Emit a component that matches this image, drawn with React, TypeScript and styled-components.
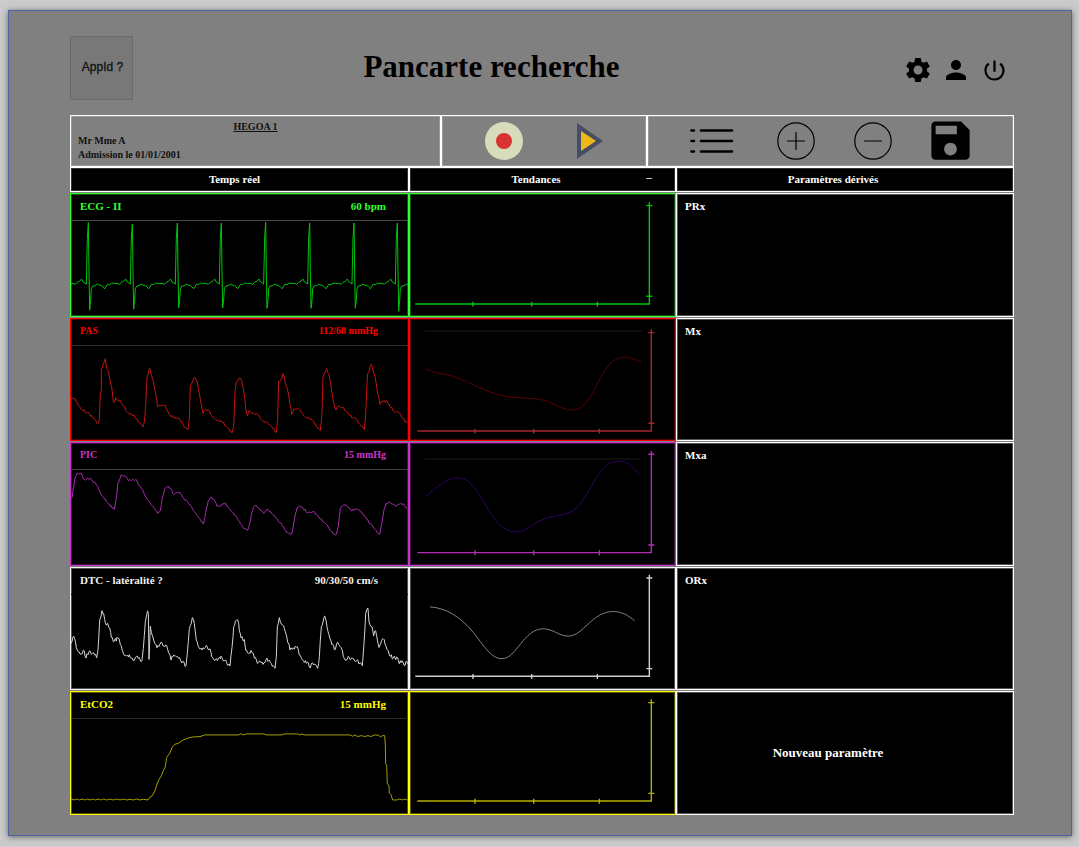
import React from "react";
import styled, { createGlobalStyle } from "styled-components";
import { MdPerson, MdPowerSettingsNew, MdSave, MdSettings } from "react-icons/md";

const GlobalStyle = createGlobalStyle`
  * { box-sizing: border-box; }
  body {
    margin: 0;
    background: #cbcbcb;
    font-family: "Liberation Serif", "Times New Roman", serif;
  }
`;

/* ---------- signal data ---------- */

type Point = [number, number];

const toPoints = (points: Point[]) => points.map((p) => p.join(",")).join(" ");

/** Parses "x y x y …" into points. */
const parse = (text: string): Point[] => {
  const n = text.trim().split(/\s+/).map(Number);
  const out: Point[] = [];
  for (let i = 0; i + 1 < n.length; i += 2) out.push([n[i], n[i + 1]]);
  return out;
};

/** Adds the small sampling noise of a sensor between the key points. */
const withNoise = (points: Point[], amount: number): Point[] => {
  let seed = 7;
  const noise = () => {
    seed = (seed * 1103515245 + 12345) % 2147483648;
    return (seed / 2147483648 - 0.5) * 2 * amount;
  };
  const out: Point[] = [points[0]];
  for (let i = 1; i < points.length; i++) {
    const [x0, y0] = points[i - 1];
    const [x1, y1] = points[i];
    const steps = Math.max(1, Math.round((x1 - x0) / 3));
    for (let s = 1; s < steps; s++) {
      const t = s / steps;
      out.push([Math.round(x0 + (x1 - x0) * t), Math.round(y0 + (y1 - y0) * t + noise())]);
    }
    out.push([x1, y1]);
  }
  return out;
};

const ecgBeats = [
  { x: 85, top: 112, low: 377 },
  { x: 217, top: 117, low: 374 },
  { x: 352, top: 114, low: 370 },
  { x: 484, top: 114, low: 370 },
  { x: 617, top: 112, low: 371 },
  { x: 749, top: 114, low: 371 },
  { x: 882, top: 114, low: 371 },
  { x: 1012, top: 114, low: 380 },
];

const ecg: Point[] = [[33, 298], ...ecgBeats.flatMap(({ x, top, low }): Point[] => [
  [x - 46, 296], [x - 39, 299], [x - 33, 293], [x - 26, 289], [x - 20, 283], [x - 16, 291],
  [x - 10, 295], [x - 6, 298], [x - 5, 250], [x - 3, 160], [x, top], [x + 1, 180], [x + 2, 260],
  [x + 4, low], [x + 7, 345], [x + 9, 312], [x + 13, 304], [x + 20, 303], [x + 27, 298],
  [x + 32, 301], [x + 39, 302], [x + 44, 307], [x + 49, 312], [x + 54, 304], [x + 58, 298],
  [x + 64, 300], [x + 70, 295], [x + 78, 296],
])];

const pas = withNoise(parse(`
  33 260 46 261 52 273 62 290 75 300 88 306 100 321 113 337 118 322 121 240 124 238 124 172 129 157 136 140
  140 170 146 182 152 215 157 240 160 270 164 272 167 258 173 267 182 268 188 280 200 300 215 306 228 322 240 335
  250 345 254 325 259 240 261 195 269 169 274 190 280 208 286 240 293 286 300 280 315 280 321 294 331 314 345 318
  360 325 371 342 384 354 388 320 391 220 397 210 404 196 411 208 417 240 422 270 429 305 434 295 447 297 455 312
  470 327 485 329 500 345 516 364 521 345 525 240 529 212 537 199 545 206 552 245 557 290 562 312 567 297 580 304
  592 308 605 326 620 330 635 344 649 363 653 320 656 208 662 205 669 185 676 215 684 240 690 280 695 308 702 291
  718 293 727 306 740 318 755 323 770 345 781 357 786 300 789 195 794 182 800 170 806 185 812 215 820 270 828 295
  835 282 848 288 860 300 878 318 892 327 905 345 913 354 917 310 921 215 923 185 934 157 940 180 947 205 953 245
  960 278 966 268 982 270 990 285 1004 301 1016 304 1028 320 1041 334`), 4);

const pic = withNoise(parse(`
  36 180 40 150 45 120 52 106 64 105 70 122 80 124 90 121 98 130 107 137 118 158 130 178 145 198 163 215 168 185
  173 140 178 125 184 110 195 114 205 128 215 126 230 126 238 145 247 154 256 176 270 194 283 212 293 227 301 219
  307 180 314 153 322 146 330 150 341 170 350 163 360 165 372 183 385 195 397 212 412 234 430 258 437 225 445 188
  453 178 462 184 471 205 484 204 494 195 505 209 520 225 532 242 548 267 563 277 568 262 575 225 580 208 588 202
  598 212 611 227 624 215 635 227 650 242 665 260 680 284 695 289 700 265 706 229 711 210 719 204 728 209 741 225
  760 221 772 232 790 252 805 268 820 289 829 290 835 265 841 212 852 200 862 205 872 217 896 215 910 232 925 250
  942 272 959 290 965 260 972 215 978 197 990 194 1000 199 1008 206 1018 199 1031 198 1041 213`), 3);

const dtc = withNoise(parse(`
  33 250 41 228 46 243 52 270 64 281 70 270 75 288 84 284 90 272 97 280 110 293 114 270 119 180 126 151 131 160
  136 188 149 203 154 232 163 243 174 234 184 258 190 279 203 285 211 293 220 302 232 288 240 298 246 301 250 265
  256 185 263 152 265 160 267 298 271 198 274 218 281 240 291 263 303 246 312 258 320 256 326 278 333 300 341 285
  350 290 362 302 378 317 382 280 388 205 397 172 403 190 409 240 417 262 426 270 436 262 450 266 455 290 464 302
  475 296 486 293 500 308 510 318 516 262 521 200 526 183 533 179 538 212 543 233 553 238 557 270 565 280 573 271
  580 280 592 310 600 303 612 308 621 294 634 310 645 325 649 290 652 200 658 172 668 195 676 215 683 246 690 270
  700 263 712 260 718 285 728 300 736 302 742 306 751 324 757 308 764 312 773 325 778 290 784 200 794 167 801 200
  810 236 818 252 826 268 833 246 843 262 850 290 858 300 868 293 878 295 890 302 900 308 907 317 912 250 917 160
  924 144 927 185 936 200 941 227 947 212 957 262 962 250 970 236 978 258 988 285 1000 294 1010 291 1018 311
  1026 302 1035 317 1040 305 1044 312`), 7);

const etco2 = parse(`
  33 343 42 346 50 343 58 346 66 343 74 346 82 343 90 346 98 343 106 346 114 343 122 346 130 343 140 346 150 343
  160 346 170 343 180 346 190 343 200 346 210 344 220 346 230 343 240 346 250 344 264 346 268 339 276 334 285 318
  291 298 297 284 304 273 310 258 316 246 320 218 330 204 337 186 345 178 356 175 366 167 382 160 400 156 420 155
  434 150 535 150 542 147 550 150 560 147 612 147 618 150 666 150 672 147 712 147 720 150 726 147 732 150 870 150
  878 154 885 150 893 155 904 152 914 155 924 152 932 155 944 150 956 151 961 156 968 152 974 152 976 180 977 238
  980 240 982 298 987 302 988 325 993 330 998 346 1010 346 1018 343 1026 346 1033 343 1043 346`);

interface Signal {
  name: string;
  value: string;
  color: string;
  trace: string;
  traceColor: string;
  traceTop: number;
  wideInset?: boolean;
  small?: boolean;
  rule?: string;
  trendTop: number;
  axisColor: string;
  axisX: number;
  axisY: number;
  trend?: string;
  trendColor?: string;
  trendRule?: string;
  derived: string;
}

const signals: Signal[] = [
  {
    name: "ECG - II", value: "60 bpm", color: "#33ff33", trace: toPoints(ecg), traceColor: "#00c60c",
    traceTop: 108, rule: "#484848", trendTop: 27, axisColor: "#00c80c", axisX: 0, axisY: 0, derived: "PRx",
  },
  {
    name: "PAS", value: "112/68 mmHg", color: "#ff0000", trace: toPoints(pas), traceColor: "#c41414",
    traceTop: 102, wideInset: true, small: true, rule: "#303030", trendTop: 402, axisColor: "#a8272f", axisX: 6, axisY: 381,
    trend: "M75 553C100 563 130 567 155 573C195 585 245 615 285 627C315 636 345 639 375 640C405 641 425 644 445 651C475 663 490 676 518 676C575 676 595 560 640 528C670 508 695 518 726 533",
    trendColor: "#5c0000", trendRule: "M75 438H726", derived: "Mx",
  },
  {
    name: "PIC", value: "15 mmHg", color: "#cc33cc", trace: toPoints(pic), traceColor: "#a52fac",
    traceTop: 96, small: true, rule: "#404040", trendTop: 16, axisColor: "#b32bb3", axisX: 6, axisY: -12,
    trend: "M75 177C105 156 135 121 175 121C245 121 265 284 348 284C385 284 405 245 460 237C480 234 500 230 515 222C570 190 590 70 656 70C680 70 700 88 719 111",
    trendColor: "#2e0066", trendRule: "M75 64H719", derived: "Mxa",
  },
  {
    name: "DTC - latéralité ?", value: "90/30/50 cm/s", color: "#f2f2f2", trace: toPoints(dtc), traceColor: "#d4d4d4",
    traceTop: 104, wideInset: true, trendTop: 389, axisColor: "#d0d0d0", axisX: 0, axisY: 357,
    trend: "M90 506C140 510 180 535 220 583C250 620 272 662 306 662C350 662 370 572 430 572C460 572 475 594 505 594C550 594 575 520 640 520C665 520 685 532 704 548",
    trendColor: "#808080", derived: "ORx",
  },
  {
    name: "EtCO2", value: "15 mmHg", color: "#ffff00", trace: toPoints(etco2), traceColor: "#a39d00",
    traceTop: 102, rule: "#2a2a2a", trendTop: 21, axisColor: "#b4b000", axisX: 6, axisY: -9, derived: "",
  },
];

/* ---------- layout ---------- */

const Page = styled.div`
  min-height: 100vh;
  padding: 10px 7px 11px 8px;
  display: flex;
`;

const Screen = styled.main`
  flex: 1;
  display: flex;
  flex-direction: column;
  padding: 25px 57px 20px 61px;
  background: #808080;
  border: 1px solid #4d62a3;
  box-shadow: 0 1px 6px rgba(0, 0, 0, 0.5);
`;

const Header = styled.header`
  display: flex;
  align-items: center;
  margin-bottom: 15px;
`;

const AppBadge = styled.button`
  width: 63px;
  height: 64px;
  padding: 0 0 2px 2px;
  border: 1px solid #6a6a6a;
  background: #787878;
  color: #111;
  font: 12px "Liberation Sans", Arial, sans-serif;
  -webkit-text-stroke: 0.3px #111;
`;

const Title = styled.h1`
  flex: 1;
  margin: 0;
  padding: 0 53px 2px 0;
  text-align: center;
  font-size: 31px;
  line-height: 36px;
  color: #000;
`;

const HeaderActions = styled.nav`
  display: flex;
  gap: 8px;
  padding: 4px 5px 0 0;
`;

const IconButton = styled.button<{ $width: number }>`
  display: flex;
  align-items: center;
  justify-content: center;
  width: ${(p) => p.$width}px;
  height: ${(p) => Math.min(p.$width, 38)}px;
  padding: 0;
  border: 0;
  background: none;
  color: #000;

  svg { flex: none; display: block; }
`;

const Toolbar = styled.div`
  display: grid;
  grid-template-columns: 371fr 206fr 367fr;
  height: 51px;
  margin-bottom: 1px;
`;

const ToolGroup = styled.div<{ $left: number; $right: number }>`
  display: flex;
  align-items: center;
  justify-content: space-between;
  padding: 0 ${(p) => p.$right}px 1px ${(p) => p.$left}px;
  border: 1px solid #fff;
  box-shadow: inset 0 0 0 1px rgba(255, 255, 255, 0.2);
`;

const Patient = styled.section`
  padding: 4px 7px;
  border: 1px solid #fff;
  box-shadow: inset 0 0 0 1px rgba(255, 255, 255, 0.2);
  font-size: 10px;
  font-weight: bold;
  line-height: 14px;
  color: #111;
`;

const Room = styled.div`
  text-align: center;
  text-decoration: underline;
`;

const Board = styled.div`
  flex: 1;
  display: grid;
  grid-template-columns: 339fr 267fr 338fr;
  grid-template-rows: 25px repeat(5, minmax(120px, 1fr));
  row-gap: 1px;
`;

const ColumnTitle = styled.h2<{ $shift: number }>`
  display: flex;
  align-items: center;
  justify-content: center;
  position: relative;
  margin: 0;
  padding: 0 ${(p) => p.$shift}px 2px 0;
  border: 1px solid #fff;
  box-shadow: inset 0 0 0 1px rgba(255, 255, 255, 0.2);
  background: #000;
  color: #fff;
  font-size: 11px;
  line-height: 14px;
`;

const Collapse = styled.button`
  position: absolute;
  top: 3px;
  right: 19px;
  width: 14px;
  height: 12px;
  padding: 0;
  border: 0;
  background: none;
  color: #fff;
  font: bold 11px/12px "Liberation Serif", serif;
`;

const Cell = styled.section<{ $color: string }>`
  display: flex;
  flex-direction: column;
  min-width: 0;
  border: 1px solid ${(p) => p.$color};
  box-shadow: inset 0 0 0 1px ${(p) => p.$color}55;
  background: #000;
  color: ${(p) => p.$color};
  font-size: 11px;
  font-weight: bold;
`;

const SignalHeader = styled.div<{ $rule: string; $wide: boolean; $small: boolean }>`
  display: flex;
  justify-content: space-between;
  height: 27px;
  padding: 0 ${(p) => (p.$wide ? 30 : 22)}px 0 9px;
  border-bottom: 1px solid ${(p) => p.$rule};
  font-size: ${(p) => (p.$small ? 10 : 11)}px;
  line-height: 24px;
`;

const Plot = styled.svg`
  display: block;
  flex: 1 1 0;
  width: 100%;
  min-height: 0;
  fill: none;

  * { vector-effect: non-scaling-stroke; }
`;

const DerivedName = styled.div`
  padding: 0 8px;
  line-height: 25px;
`;

const NewParameter = styled.button`
  flex: 1;
  padding: 0 34px 0 0;
  border: 0;
  background: none;
  color: #fff;
  font: bold 13px "Liberation Serif", serif;
`;

/* ---------- drawings ---------- */

const RecordIcon = () => (
  <svg width="38" height="38" viewBox="0 0 38 38">
    <circle cx="19" cy="19" r="19" fill="#d9dcba" />
    <circle cx="19" cy="19" r="8" fill="#d93232" />
  </svg>
);

const PlayIcon = () => (
  <svg width="26" height="36" viewBox="0 0 26 36">
    <path d="M0 0L26 18L0 36Z" fill="#464e66" />
    <path d="M4 8L19 18L4 28Z" fill="#ecba18" />
  </svg>
);

const ListIcon = () => (
  <svg width="48" height="26" viewBox="0 0 48 26" stroke="#000" strokeWidth="2.6" strokeLinecap="round">
    <path d="M1.5 2.5H4M11 2.5H42M1.5 13H4M11 13H42M1.5 23.5H4M11 23.5H42" />
  </svg>
);

const RoundIcon = ({ plus }: { plus?: boolean }) => (
  <svg width="38" height="38" viewBox="0 0 38 38" fill="none" stroke="#000" strokeWidth="1.2">
    <circle cx="19" cy="19" r="18.2" />
    <path d={plus ? "M10.5 19H27.5M19 10.5V27.5" : "M10.5 19H27.5"} strokeLinecap="round" />
  </svg>
);

const Axes = ({ x, y, color }: { x: number; y: number; color: string }) => (
  <path
    transform={`translate(${x} ${y})`}
    stroke={color}
    strokeWidth="1.4"
    d="M46 358H748V52M219 351V366M395 351V366M592 351V366M739 62H757M739 335H757"
  />
);

const SignalRow = ({ signal }: { signal: Signal }) => (
  <>
    <Cell $color={signal.color}>
      <SignalHeader $rule={signal.rule ?? "#000"} $wide={!!signal.wideInset} $small={!!signal.small}>
        <span>{signal.name}</span>
        <span>{signal.value}</span>
      </SignalHeader>
      <Plot viewBox={`33 ${signal.traceTop} 1011 285`} preserveAspectRatio="none">
        <polyline points={signal.trace} stroke={signal.traceColor} strokeWidth="1" />
      </Plot>
    </Cell>
    <Cell $color={signal.color}>
      <Plot viewBox={`30 ${signal.trendTop} 795 366`} preserveAspectRatio="none">
        {signal.trendRule && <path d={signal.trendRule} stroke="#1c1c1c" />}
        {signal.trend && <path d={signal.trend} stroke={signal.trendColor} />}
        <Axes x={signal.axisX} y={signal.axisY} color={signal.axisColor} />
      </Plot>
    </Cell>
    <Cell $color="#ffffff">
      {signal.derived ? (
        <DerivedName>{signal.derived}</DerivedName>
      ) : (
        <NewParameter type="button">Nouveau paramètre</NewParameter>
      )}
    </Cell>
  </>
);

export default function App() {
  return (
    <>
      <GlobalStyle />
      <Page>
        <Screen>
          <Header>
            <AppBadge type="button">AppId ?</AppBadge>
            <Title>Pancarte recherche</Title>
            <HeaderActions>
              <IconButton type="button" $width={30} aria-label="Réglages"><MdSettings size={30} /></IconButton>
              <IconButton type="button" $width={30} aria-label="Utilisateur"><MdPerson size={30} /></IconButton>
              <IconButton type="button" $width={30} aria-label="Quitter"><MdPowerSettingsNew size={27} /></IconButton>
            </HeaderActions>
          </Header>

          <Toolbar>
            <Patient>
              <Room>HEGOA 1</Room>
              <div>Mr Mme A</div>
              <div>Admission le 01/01/2001</div>
            </Patient>
            <ToolGroup $left={43} $right={43}>
              <IconButton type="button" $width={38} aria-label="Enregistrer le signal"><RecordIcon /></IconButton>
              <IconButton type="button" $width={26} aria-label="Lecture"><PlayIcon /></IconButton>
            </ToolGroup>
            <ToolGroup $left={42} $right={44}>
              <IconButton type="button" $width={48} aria-label="Liste"><ListIcon /></IconButton>
              <IconButton type="button" $width={38} aria-label="Ajouter"><RoundIcon plus /></IconButton>
              <IconButton type="button" $width={38} aria-label="Retirer"><RoundIcon /></IconButton>
              <IconButton type="button" $width={38} aria-label="Sauvegarder"><MdSave size={51} /></IconButton>
            </ToolGroup>
          </Toolbar>

          <Board>
            <ColumnTitle $shift={10}>Temps réel</ColumnTitle>
            <ColumnTitle $shift={13}>
              Tendances
              <Collapse type="button" aria-label="Réduire">–</Collapse>
            </ColumnTitle>
            <ColumnTitle $shift={24}>Paramètres dérivés</ColumnTitle>
            {signals.map((signal) => (
              <SignalRow key={signal.name} signal={signal} />
            ))}
          </Board>
        </Screen>
      </Page>
    </>
  );
}
